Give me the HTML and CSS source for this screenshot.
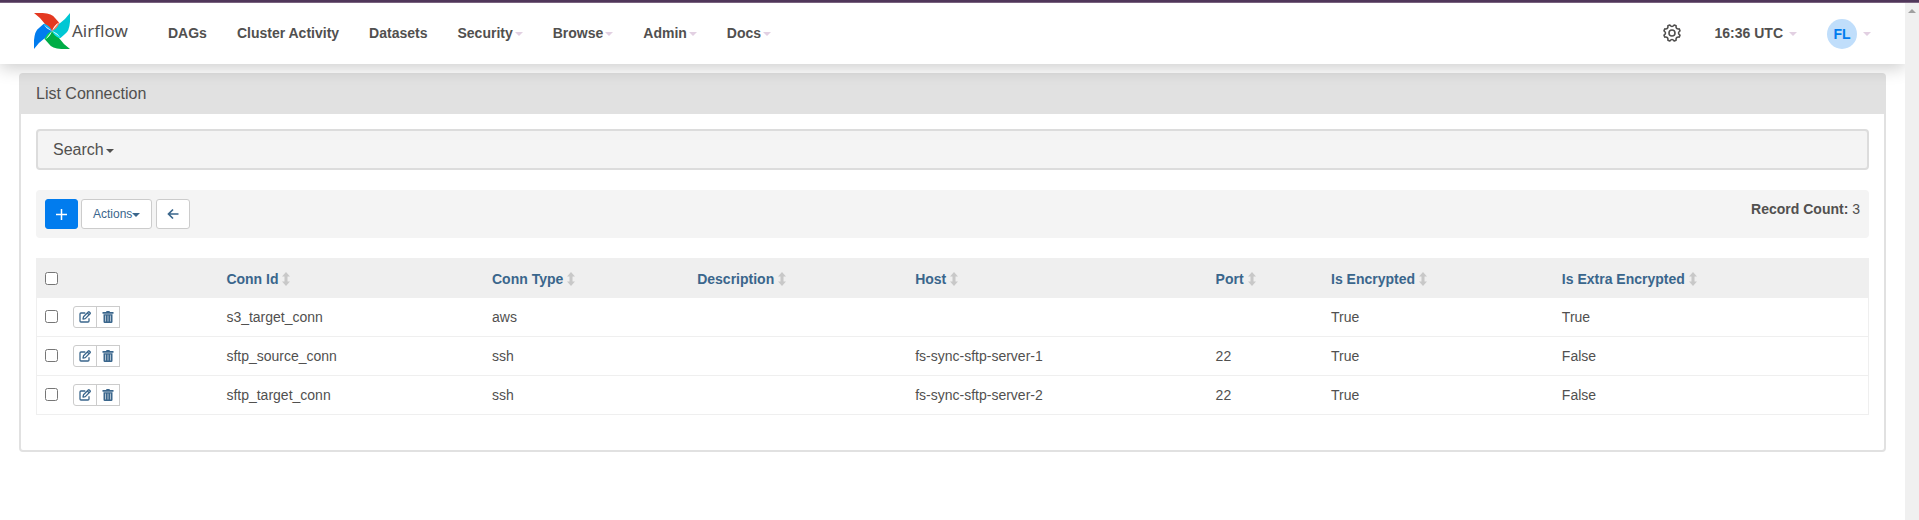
FILE: index.html
```html
<!DOCTYPE html>
<html lang="en">
<head>
<meta charset="utf-8">
<title>List Connection - Airflow</title>
<meta name="viewport" content="width=device-width, initial-scale=1">
<link rel="stylesheet" href="styles.css">
</head>
<body>
<svg class="sprite" aria-hidden="true">
  <symbol id="edit" viewBox="0 0 12 12"><path d="M6.3 2H2Q1 2 1 3v7q0 1 1 1h7q1 0 1-1V7.200M4 8l.5-2.200L9.300 1q.5-.5 1 0l.8.8q.5.5 0 1L6.300 7.600zM8.300 2l1.800 1.800" fill="none" stroke="currentColor" stroke-width="1.300" stroke-linejoin="round"/></symbol>
  <symbol id="trash" viewBox="0 0 12 12"><path d="M.5 1h3.500l.6-1h2.800L8 1h3.500v1.700H.5z" fill="currentColor"/><path fill-rule="evenodd" d="M1.500 3.200h9v7.600q0 1.200-1.200 1.200H2.700q-1.200 0-1.200-1.200zM3.400 4.500v6h.6v-6zM5.700 4.500v6h.6v-6zM8 4.500v6h.6v-6z" fill="currentColor"/></symbol>
  <symbol id="sort" viewBox="0 0 8 14"><path d="M4 0l4 4.500H5.500v5H8L4 14 0 9.500h2.500v-5H0z" fill="currentColor"/></symbol>
</svg>
<div class="strip"></div>
<div class="window">
  <div class="page">
    <header class="navbar">
      <a class="brand" href="#">
        <svg width="36" height="36" viewBox="0 0 36 36" aria-hidden="true">
          <path d="M18 18L25 9.500Q27 12 24.500 15.500 22 18.500 18 18z" fill="#ff7557"/>
          <path d="M18 18L27 24.500Q24.500 26 21 24 18 21.500 18 18z" fill="#11e1ee"/>
          <path d="M18 18L11 27Q9.500 24.500 12 21 14.500 18 18 18z" fill="#04d659"/>
          <path d="M18 18L9 11.500Q11.500 9.500 15 12 18 14.500 18 18z" fill="#0cb6ff"/>
          <path d="M0 0Q17-1 21 5L25 9.500Q20 12 18 18 16 13 11 11 7 5 0 0z" fill="#e43921"/>
          <path d="M36 0Q37 17 31 21L26.500 25Q24 20 18 18 23 16 25 11 31 7 36 0z" fill="#00c7d4"/>
          <path d="M36 36Q19 37 15 31L11 26.500Q16 24 18 18 20 23 25 25 29 31 36 36z" fill="#00ad46"/>
          <path d="M0 36Q-1 19 5 15L9.500 11Q12 16 18 18 13 20 11 25 5 29 0 36z" fill="#017cee"/>
        </svg>
        <span>Airflow</span>
      </a>
      <nav class="menu">
        <a href="#">DAGs</a>
        <a href="#">Cluster Activity</a>
        <a href="#">Datasets</a>
        <a href="#">Security<i class="caret"></i></a>
        <a href="#">Browse<i class="caret"></i></a>
        <a href="#">Admin<i class="caret"></i></a>
        <a href="#">Docs<i class="caret"></i></a>
      </nav>
      <div class="tools">
        <a class="settings" href="#" aria-label="Settings"><svg width="18" height="18" viewBox="-9 -9 18 18" fill="none" stroke="currentColor" stroke-width="1.600" stroke-linejoin="round"><path d="M-2.200-8Q0-5 2.200-8L4.100-7.200Q3.600-3.600 7.200-4.100L8-2.200Q5 0 8 2.200L7.200 4.100Q3.600 3.600 4.100 7.200L2.200 8Q0 5-2.200 8L-4.100 7.200Q-3.600 3.600-7.200 4.100L-8 2.200Q-5 0-8-2.200L-7.200-4.100Q-3.600-3.600-4.100-7.200Z"/><circle r="3"/></svg></a>
        <a class="clock" href="#">16:36 UTC<i class="caret"></i></a>
        <a class="user" href="#"><span class="avatar">FL</span><i class="caret"></i></a>
      </div>
    </header>
    <main class="panel">
      <h1 class="panel-title">List Connection</h1>
      <div class="panel-body">
        <button class="search" type="button">Search<i class="caret"></i></button>
        <div class="toolbar">
          <div class="buttons">
            <a class="btn add" href="#" aria-label="Add"><svg width="11" height="11" viewBox="0 0 11 11"><path d="M5.500 0v11M0 5.500h11" stroke="currentColor" stroke-width="1.500"/></svg></a>
            <button class="btn actions" type="button">Actions<i class="caret"></i></button>
            <button class="btn back" type="button" aria-label="Back"><svg width="12" height="12" viewBox="0 0 12 12"><path d="M11.500 6H2M6 1.500L1.500 6 6 10.500" fill="none" stroke="currentColor" stroke-width="1.700"/></svg></button>
          </div>
          <div class="count"><strong>Record Count:</strong> 3</div>
        </div>
        <table class="list">
          <colgroup><col class="c-check"><col class="c-edit"><col class="c-id"><col class="c-type"><col class="c-desc"><col class="c-host"><col class="c-port"><col class="c-enc"><col></colgroup>
          <thead>
            <tr>
              <th><input type="checkbox" aria-label="Select all"></th>
              <th></th>
              <th><a href="#">Conn Id<svg class="sort"><use href="#sort"/></svg></a></th>
              <th><a href="#">Conn Type<svg class="sort"><use href="#sort"/></svg></a></th>
              <th><a href="#">Description<svg class="sort"><use href="#sort"/></svg></a></th>
              <th><a href="#">Host<svg class="sort"><use href="#sort"/></svg></a></th>
              <th><a href="#">Port<svg class="sort"><use href="#sort"/></svg></a></th>
              <th><a href="#">Is Encrypted<svg class="sort"><use href="#sort"/></svg></a></th>
              <th><a href="#">Is Extra Encrypted<svg class="sort"><use href="#sort"/></svg></a></th>
            </tr>
          </thead>
          <tbody>
            <tr>
              <td><input type="checkbox" aria-label="Select s3_target_conn"></td>
              <td><div class="group"><a href="#" aria-label="Edit"><svg class="icon"><use href="#edit"/></svg></a><button type="button" aria-label="Delete"><svg class="icon"><use href="#trash"/></svg></button></div></td>
              <td>s3_target_conn</td><td>aws</td><td></td><td></td><td></td><td>True</td><td>True</td>
            </tr>
            <tr>
              <td><input type="checkbox" aria-label="Select sftp_source_conn"></td>
              <td><div class="group"><a href="#" aria-label="Edit"><svg class="icon"><use href="#edit"/></svg></a><button type="button" aria-label="Delete"><svg class="icon"><use href="#trash"/></svg></button></div></td>
              <td>sftp_source_conn</td><td>ssh</td><td></td><td>fs-sync-sftp-server-1</td><td>22</td><td>True</td><td>False</td>
            </tr>
            <tr>
              <td><input type="checkbox" aria-label="Select sftp_target_conn"></td>
              <td><div class="group"><a href="#" aria-label="Edit"><svg class="icon"><use href="#edit"/></svg></a><button type="button" aria-label="Delete"><svg class="icon"><use href="#trash"/></svg></button></div></td>
              <td>sftp_target_conn</td><td>ssh</td><td></td><td>fs-sync-sftp-server-2</td><td>22</td><td>True</td><td>False</td>
            </tr>
          </tbody>
        </table>
      </div>
    </main>
  </div>
  <div class="scrollbar"><i></i></div>
</div>
</body>
</html>
```
FILE: styles.css
```css
* { box-sizing: border-box; }

body {
  margin: 0;
  min-height: 100vh;
  display: flex;
  flex-direction: column;
  background: #fff;
  color: #51504f;
  font: 14px/20px "Liberation Sans", Arial, sans-serif;
}

a { color: inherit; text-decoration: none; }
button { font: inherit; color: inherit; cursor: pointer; }
svg { display: block; }
.sprite { position: absolute; width: 0; height: 0; }

.strip {
  height: 3px;
  background: #50375a;
  border-bottom: 1px solid #79627f;
}

.window { flex: 1; display: flex; }
.page { flex: 1; min-width: 0; overflow: hidden; }

.scrollbar {
  width: 14px;
  background: #f0f0f0;
  display: flex;
  justify-content: center;
  padding-top: 6px;
}
.scrollbar i {
  width: 0;
  height: 0;
  border: 4px solid transparent;
  border-top: 0;
  border-bottom-color: #a0a0a0;
}

.caret {
  display: inline-block;
  vertical-align: middle;
  margin-left: 2px;
  border: 4px solid transparent;
  border-top: 4px dashed currentColor;
  border-bottom: 0;
}

/* Navigation */
.navbar {
  position: relative;
  display: flex;
  align-items: center;
  min-height: 61px;
  padding: 0 34px;
  background: #fff;
  box-shadow: 0 4px 16px rgba(0, 0, 0, .2);
  font-weight: 700;
}
.navbar .caret { border-top-color: #e2d0e2; }
.brand {
  display: flex;
  align-items: center;
  gap: 2px;
  width: 134px;
  padding-bottom: 5px;
  font: 17px/24px "Noto Sans", sans-serif;
}
.menu { display: flex; gap: 30px; padding-bottom: 1px; }
.tools { display: flex; align-items: center; gap: 34px; margin-left: auto; }
.settings { padding-bottom: 2px; }
.clock { padding-bottom: 1px; }
.clock .caret, .user .caret { margin-left: 6px; }
.user { display: flex; align-items: center; margin-left: -4px; }
.avatar {
  width: 30px;
  height: 30px;
  border-radius: 50%;
  background: #c0defb;
  color: #017cee;
  line-height: 30px;
  text-align: center;
}

/* Panel */
.panel {
  margin: 9px 19px 0;
  border: 2px solid #e1e1e1;
  border-radius: 4px;
}
.panel-title {
  margin: 0;
  padding: 9px 15px 10px;
  background: #e1e1e1;
  font-size: 16px;
  font-weight: 400;
  line-height: 20px;
}
.panel-body { padding: 15px 15px 35px; }

.search {
  display: block;
  width: 100%;
  padding: 9px 15px 8px;
  border: 2px solid #dcdcdc;
  border-radius: 4px;
  background: #f4f4f4;
  font-size: 16px;
  text-align: left;
}

.toolbar {
  display: flex;
  justify-content: space-between;
  margin: 20px 0;
  padding: 9px;
  border-radius: 4px;
  background: #f4f4f4;
}
.buttons { display: flex; gap: 3px; }
.btn {
  display: flex;
  align-items: center;
  justify-content: center;
  height: 30px;
  padding: 0 10px;
  border: 1px solid #ccc;
  border-radius: 3px;
  background: #fff;
  color: #3a668c;
  font-size: 12px;
}
.btn .caret { margin: 2px 0 0; }
.add { border-color: #017cee; background: #017cee; color: #fff; }
.actions { padding: 0 11px; }
.back { margin-left: 1px; }

/* Connections table */
.list {
  width: 100%;
  table-layout: fixed;
  border-collapse: collapse;
  border: 1px solid #efefef;
}
.c-check { width: 28px; }
.c-edit { width: 8.4%; }
.c-id { width: 14.5%; }
.c-type { width: 11.2%; }
.c-desc { width: 11.9%; }
.c-host { width: 16.4%; }
.c-port { width: 6.3%; }
.c-enc { width: 12.6%; }
.list th, .list td {
  height: 39px;
  padding: 0 8px;
  border-bottom: 1px solid #efefef;
  text-align: left;
}
.list th { background: #efefef; color: #3a668c; padding-top: 2px; }
.list th a { display: flex; align-items: center; gap: 4px; }
.list input { display: block; width: 13px; height: 13px; margin: 0 0 2px; }
.sort { width: 8px; height: 14px; color: #c8c8c8; }
.icon { width: 12px; height: 12px; }
.group { display: flex; color: #3a668c; }
.group a, .group button {
  display: flex;
  align-items: center;
  justify-content: center;
  width: 24px;
  height: 22px;
  padding: 0;
  border: 1px solid #ccc;
  background: #fff;
}
.group a { border-radius: 3px 0 0 3px; }
.group button { margin-left: -1px; }
```
